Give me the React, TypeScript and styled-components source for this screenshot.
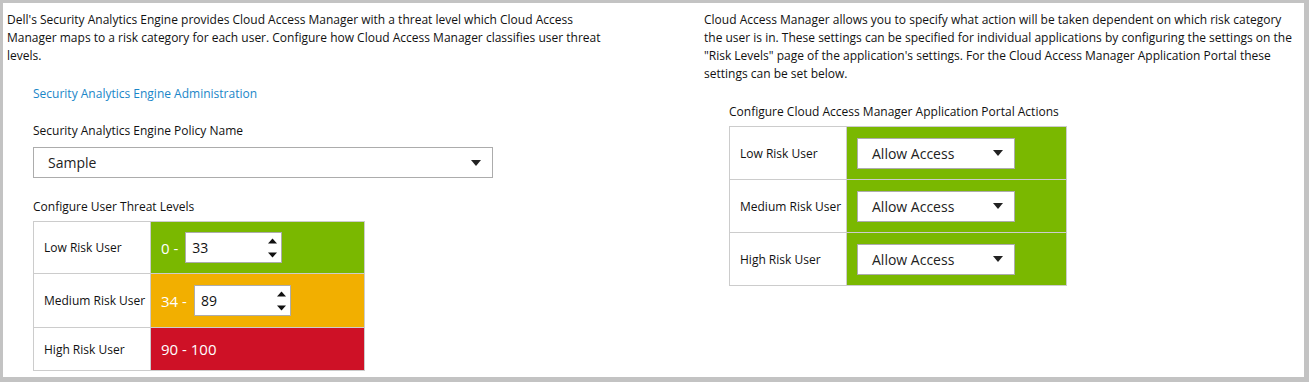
import styled, { createGlobalStyle } from "styled-components";

const GlobalStyle = createGlobalStyle`
  html, body {
    margin: 0;
    padding: 0;
    background: #ffffff;
  }
  body {
    font-family: "Open Sans", "Liberation Sans", Arial, sans-serif;
    color: #111111;
  }
`;

const Frame = styled.div`
  box-sizing: border-box;
  width: 1309px;
  height: 382px;
  border-style: solid;
  border-color: #c3c3c3;
  border-width: 3px 5px 5px 3px;
  background: #ffffff;
  display: flex;
`;

const LeftColumn = styled.div`
  width: 650px;
  padding: 8px 0 0 4px;
  box-sizing: border-box;
`;

const RightColumn = styled.div`
  flex: 1;
  padding: 8px 0 0 51px;
  box-sizing: border-box;
`;

const Intro = styled.p<{ $width: number }>`
  margin: 0;
  width: ${(p) => p.$width}px;
  font-size: 12px;
  line-height: 18px;
`;

const Section = styled.div<{ $indent: number }>`
  padding-left: ${(p) => p.$indent}px;
`;

const AdminLink = styled.a`
  display: block;
  margin-top: 20px;
  font-size: 12px;
  line-height: 18px;
  color: #1a86c8;
  text-decoration: none;
  cursor: pointer;
`;

const FieldLabel = styled.div<{ $gap: number }>`
  margin-top: ${(p) => p.$gap}px;
  font-size: 12px;
  line-height: 18px;
`;

const Select = styled.div<{ $width: number; $height: number }>`
  box-sizing: border-box;
  width: ${(p) => p.$width}px;
  height: ${(p) => p.$height}px;
  border: 1px solid #acacac;
  background: #ffffff;
  display: flex;
  align-items: center;
  justify-content: space-between;
  padding: 0 11px 0 14px;
  font-size: 14px;
  color: #222222;
`;

const PolicySelect = styled(Select)`
  margin-top: 7px;
`;

const Arrow = () => (
  <svg width="10" height="6" viewBox="0 0 10 6">
    <path d="M0 0 L10 0 L5 6 Z" fill="#222" />
  </svg>
);

const Table = styled.div<{ $width: number; $gap: number }>`
  margin-top: ${(p) => p.$gap}px;
  width: ${(p) => p.$width}px;
  border: 1px solid #cccccc;
  box-sizing: border-box;
`;

const Row = styled.div<{ $height: number }>`
  display: flex;
  height: ${(p) => p.$height}px;
  & + & {
    border-top: 1px solid #cccccc;
  }
`;

const LabelCell = styled.div`
  width: 117px;
  flex-shrink: 0;
  border-right: 1px solid #cccccc;
  display: flex;
  align-items: center;
  padding-left: 10px;
  box-sizing: border-box;
  font-size: 12px;
`;

const ValueCell = styled.div<{ $bg: string }>`
  flex: 1;
  background: ${(p) => p.$bg};
  display: flex;
  align-items: center;
  padding-left: 10px;
  color: #ffffff;
  font-size: 15px;
  white-space: pre;
`;

const NumberBox = styled.div`
  box-sizing: border-box;
  width: 97px;
  height: 31px;
  margin-left: 7px;
  border: 1px solid #acacac;
  background: #ffffff;
  display: flex;
  align-items: center;
  justify-content: space-between;
  padding: 0 4px 0 6px;
  color: #111111;
  font-size: 14px;
`;

const Spinner = () => (
  <svg width="9" height="24" viewBox="0 0 9 24">
    <path d="M4.5 2.5 L9 7.5 L0 7.5 Z" fill="#111" />
    <path d="M0 16.5 L9 16.5 L4.5 21.5 Z" fill="#111" />
  </svg>
);

const GREEN = "#7ab800";
const ORANGE = "#f2af00";
const RED = "#ce1126";

const threatRows = [
  { label: "Low Risk User", from: "0", to: "33", bg: GREEN, h: 51 },
  { label: "Medium Risk User", from: "34", to: "89", bg: ORANGE, h: 53 },
  { label: "High Risk User", from: "90", to: "100", bg: RED, h: 42 },
];

const actionRows = ["Low Risk User", "Medium Risk User", "High Risk User"];

const App = () => {
  return (
    <>
      <GlobalStyle />
      <Frame>
        <LeftColumn>
          <Intro $width={618}>
            Dell's Security Analytics Engine provides Cloud Access Manager with a
            threat level which Cloud Access Manager maps to a risk category for each
            user. Configure how Cloud Access Manager classifies user threat levels.
          </Intro>
          <Section $indent={26}>
            <AdminLink>Security Analytics Engine Administration</AdminLink>
            <FieldLabel $gap={19}>Security Analytics Engine Policy Name</FieldLabel>
            <PolicySelect $width={460} $height={31}>
              <span>Sample</span>
              <Arrow />
            </PolicySelect>
            <FieldLabel $gap={20}>Configure User Threat Levels</FieldLabel>
            <Table $width={332} $gap={5}>
              {threatRows.map((r) => (
                <Row key={r.label} $height={r.h}>
                  <LabelCell>{r.label}</LabelCell>
                  <ValueCell $bg={r.bg}>
                    {r.label === "High Risk User" ? (
                      `${r.from} - ${r.to}`
                    ) : (
                      <>
                        {`${r.from} -`}
                        <NumberBox>
                          <span>{r.to}</span>
                          <Spinner />
                        </NumberBox>
                      </>
                    )}
                  </ValueCell>
                </Row>
              ))}
            </Table>
          </Section>
        </LeftColumn>
        <RightColumn>
          <Intro $width={590}>
            Cloud Access Manager allows you to specify what action will be taken
            dependent on which risk category the user is in. These settings can be
            specified for individual applications by configuring the settings on the
            "Risk Levels" page of the application's settings. For the Cloud Access
            Manager Application Portal these settings can be set below.
          </Intro>
          <Section $indent={25}>
            <FieldLabel $gap={20}>
              Configure Cloud Access Manager Application Portal Actions
            </FieldLabel>
            <Table $width={338} $gap={5}>
              {actionRows.map((label) => (
                <Row key={label} $height={52}>
                  <LabelCell>{label}</LabelCell>
                  <ValueCell $bg={GREEN}>
                    <Select $width={158} $height={31}>
                      <span>Allow Access</span>
                      <Arrow />
                    </Select>
                  </ValueCell>
                </Row>
              ))}
            </Table>
          </Section>
        </RightColumn>
      </Frame>
    </>
  );
};

export default App;
